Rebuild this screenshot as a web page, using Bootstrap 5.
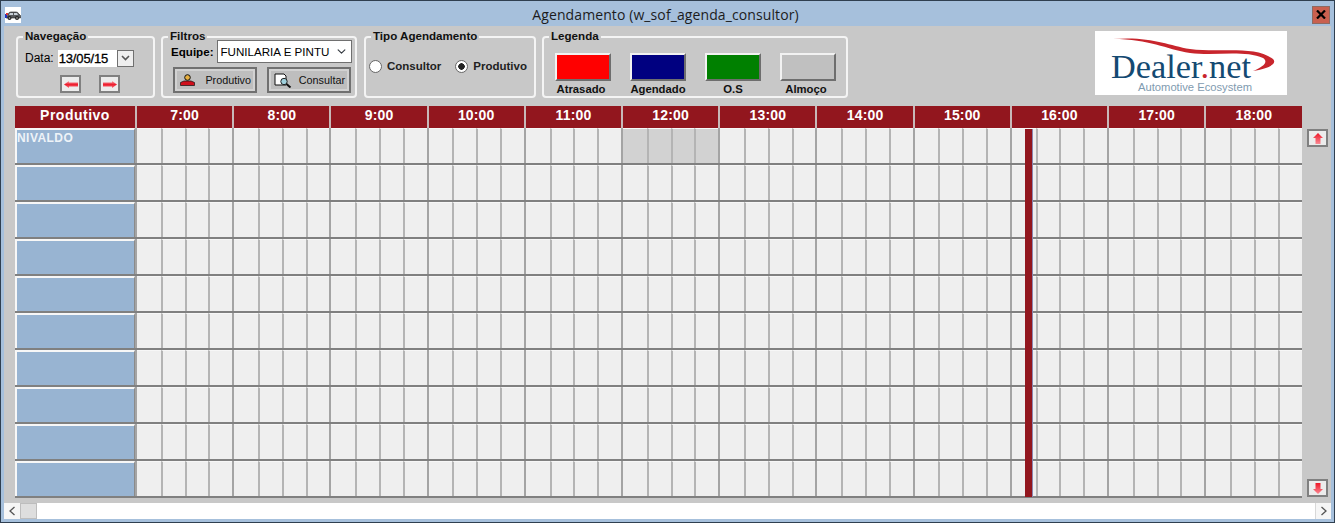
<!DOCTYPE html>
<html lang="pt">
<head>
<meta charset="utf-8">
<title>Agendamento</title>
<link rel="stylesheet" href="https://cdn.jsdelivr.net/npm/bootstrap@5.3.0/dist/css/bootstrap.min.css">
<style>
html,body{height:100%;margin:0;overflow:hidden;background:#c8c8c8}
body{font-family:"Liberation Sans",Arial,sans-serif;color:#000}
.win{width:1335px;height:523px;background:#c8c8c8;border:1px solid #2f3f50;border-bottom-width:1px}
.win-title{height:25px;background:#a6c0dc;padding:0 4px 0 4px;flex:none}
.win-title-text{font-family:"Open Sans",sans-serif;font-size:14px;letter-spacing:.1px;color:#1c1c1c;left:-1px;top:1px}
.app-icon{width:16px;height:16px;background:#fff;display:block;position:relative;top:1px}
.close-x{width:18px;height:18px;background:#c9604f;border:1px solid #8d6a62;font-size:0;padding:0;position:relative;top:1px}
.win-body{border-left:3px solid #a6c0dc;border-right:3px solid #a6c0dc;border-bottom:3px solid #a6c0dc;flex:1;min-height:0}
.toolbar{height:80px;padding:4px 0 0 12px;flex:none}
.gbox{height:68px;margin:0 6px 0 0;border:2px solid #f4f4f4;border-radius:4px;padding:0;min-width:0;flex:none}
.gbox legend{float:none;width:auto;font-size:11.6px;font-weight:700;line-height:13px;margin:-1px 0 0 5px;padding:0 2px;color:#111;position:relative;top:-1px}
.g-nav{width:139px}.g-fil{width:196px;margin-right:7px}.g-tipo{width:172px}.g-leg{width:306px}
.nav-row{margin:6px 0 0 7px}
.g-lab{font-size:12px;margin-right:4px}
.date-in{width:59px;height:17px;background:#fff;font-size:13px;line-height:17px;letter-spacing:-.15px;padding-left:1px;-webkit-text-stroke:.3px #000}
.date-drop{width:17px;height:17px;background:#eee;border:1px solid #707070;padding:0}
.arrow-row{margin:8px 0 0 42px;gap:18px}
.arrow-btn{width:21px;height:18px;background:#ececec;border:2px solid #808080;padding:0;line-height:0}
.fil-top{padding-left:8px;margin-top:-3px}
.equipe-lab{font-size:11.6px;font-weight:700;margin-right:3px}
.equipe-sel{width:135px;height:23px;border:1px solid #707070;border-radius:0;padding:0 0 0 3px;font-size:11.6px;line-height:21px;background-position:right 4px center;background-size:11px 9px;color:#000;font-family:"Liberation Sans",sans-serif}
.fil-btns{padding-left:10px;margin-top:4px;gap:10px}
.tool-btn{width:84px;height:26px;border:2px solid #707070;border-radius:0;background:#bebebe;box-shadow:inset 0 0 0 2px #d2d2d2;padding:0 4px 0 5px;font-size:10.8px;color:#111}
.tipo-row{margin:15px 0 0 3px}
.tipo-lab{font-size:11.5px;font-weight:700;color:#222;margin-left:5px}
.tipo-gap{margin-right:14px}
.rad{width:13px;height:13px;margin:0;border:1px solid #666;background-color:#fff;float:none;flex:none}
.rad:checked{background-color:#fff;border-color:#666;background-image:radial-gradient(circle,#222 0 3px,transparent 3.5px)}
.leg-row{margin:10px 0 0 11px;gap:19px}
.leg-item{width:56px}
.sw{width:56px;height:28px;border:2px solid;border-color:#f2f2f2 #6e6e6e #6e6e6e #f2f2f2}
.sw-red{background:#ff0000}.sw-navy{background:#000080}.sw-green{background:#008000}.sw-gray{background:#c0c0c0}
.leg-txt{font-size:11.3px;font-weight:700;line-height:13px;margin-top:2px;white-space:nowrap;color:#111}
.leg-nudge{padding-right:4px}
.logo-box{width:192px;height:64px;background:#fff;margin:1px 44px 0 auto;flex:none}
.sched-wrap{padding:0 0 0 11px;height:391px;flex:none}
.sched{width:1286.5px;position:relative;flex:none}
.hrow{display:grid;grid-template-columns:120px repeat(12,1fr)}
.hhead{height:22px;background:#92161e;color:#fff;font-weight:700;font-size:14px;line-height:18px;text-align:center}
.hhead > div{border-left:2px solid #c8b8b8;letter-spacing:.15px}
.hhead > div:first-child{border-left:0;letter-spacing:.5px}
.srow{height:37px;border-bottom:2px solid #808080}
.name-cell{background:#98b4d2;border-top:2px solid #f7f7f7;border-left:2px solid #f7f7f7;border-right:1px solid #8a8a8a;color:#eef3f8;font-weight:700;font-size:12px;line-height:15px;padding-top:1px;letter-spacing:.45px;overflow:hidden}
.hour-cell{display:grid;grid-template-columns:repeat(4,1fr);border-left:2px solid #a4a4a4}
.hour-cell > div{background:#efefef;border-left:2px solid #b4b4b4;border-top:1px solid #f7f7f7}
.hour-cell > div:first-child{border-left:0}
.hour-cell.lunch > div{background:#d2d2d2}
.now-bar{position:absolute;left:1010px;top:23px;bottom:0;width:8px;background:#92161e;border-right:1px solid #8b86b0}
.side-col{width:21px;margin-left:5.5px;padding-top:23px}
.sc-btn{width:21px;height:18px;background:#ececec;border:2px solid #808080;padding:0;line-height:0}
.hscroll{height:16px;margin-top:6px;background:#fff;flex:none}
.hs-arrow{width:16px;height:16px;background:#f6f6f6;padding:0;border:0;line-height:0}
.hs-thumb{width:17px;height:16px;background:#dedede;border:1px solid #bdbdbd}
.hs-track{background:#fff}
.hs-end{border-left:1px solid #d8d8d8}
</style>
</head>
<body>
<svg width="0" height="0" class="position-absolute">
  <defs>
    <linearGradient id="gradH" x1="0" y1="0" x2="0" y2="1"><stop offset="0" stop-color="#f7a0a8"/><stop offset=".5" stop-color="#ee2030"/><stop offset="1" stop-color="#f56a75"/></linearGradient>
    <linearGradient id="gradV" x1="0" y1="0" x2="0" y2="1"><stop offset="0" stop-color="#ee1525"/><stop offset="1" stop-color="#fa8a94"/></linearGradient>
  </defs>
</svg>
<div class="win d-flex flex-column">
  <div class="win-title d-flex align-items-center justify-content-between position-relative">
    <svg class="app-icon" viewBox="0 0 16 16"><path d="M2 10 L3.500 6.500 Q4 5 6 5 H11 Q13 5 13.500 6.500 L15.500 8.500 V11 H1 V10 Z" fill="#55585c" stroke="#222" stroke-width=".6"/><path d="M5 6 H8 V8 H4 Z M9 6 H12 L13 8 H9 Z" fill="#c8d0d8"/><circle cx="4.500" cy="11" r="2" fill="#222"/><circle cx="12" cy="11" r="2" fill="#222"/><circle cx="4.500" cy="11" r=".8" fill="#bbb"/><circle cx="12" cy="11" r=".8" fill="#bbb"/><path d="M0 7h2v4H0z" fill="#2030c0"/><path d="M1 6h2v2H1z" fill="#d33"/></svg>
    <div class="win-title-text position-relative">Agendamento (w_sof_agenda_consultor)</div>
    <button class="close-x d-flex align-items-center justify-content-center" aria-label="Fechar"><svg width="10" height="9" viewBox="0 0 10 9"><path d="M1 .5 L9 8.500 M9 .5 L1 8.500" stroke="#000" stroke-width="2.200"/></svg></button>
  </div>
  <div class="win-body d-flex flex-column">
    <div class="toolbar d-flex align-items-start">
      <fieldset class="gbox g-nav">
        <legend>Navegação</legend>
        <div class="nav-row d-flex align-items-center">
          <span class="g-lab">Data:</span>
          <span class="date-in">13/05/15</span>
          <button class="date-drop d-flex align-items-center justify-content-center"><svg width="9" height="6" viewBox="0 0 9 6"><path d="M1 1 L4.500 4.500 L8 1" fill="none" stroke="#555" stroke-width="1.600"/></svg></button>
        </div>
        <div class="arrow-row d-flex">
          <button class="arrow-btn"><svg width="14" height="7" viewBox="0 0 14 7"><path d="M0 3.500 L5 0 V1.500 H14 V5.500 H5 V7 Z" fill="url(#gradH)"/></svg></button>
          <button class="arrow-btn"><svg width="14" height="7" viewBox="0 0 14 7"><path d="M14 3.500 L9 0 V1.500 H0 V5.500 H9 V7 Z" fill="url(#gradH)"/></svg></button>
        </div>
      </fieldset>
      <fieldset class="gbox g-fil">
        <legend>Filtros</legend>
        <div class="fil-top d-flex align-items-center">
          <span class="equipe-lab">Equipe:</span>
          <select class="form-select equipe-sel"><option>FUNILARIA E PINTU</option></select>
        </div>
        <div class="fil-btns d-flex">
          <button class="tool-btn d-flex align-items-center justify-content-between"><svg width="15" height="12" viewBox="0 0 15 12"><path d="M.5 11.500 V8.500 L4 7 H11 L14.500 8.500 V11.500 Z" fill="#d0101c" stroke="#111" stroke-width=".7"/><circle cx="7.500" cy="3.500" r="2.800" fill="#e8b040" stroke="#111"/></svg><span>Produtivo</span></button>
          <button class="tool-btn d-flex align-items-center justify-content-between"><svg width="18" height="15" viewBox="0 0 18 15"><path d="M1 1 H10 L12 3 V12 H1 Z" fill="#fff" stroke="#111"/><circle cx="10" cy="8.500" r="3.200" fill="#9fd0dc" stroke="#222"/><path d="M12.500 11 L16.500 14.500" stroke="#111" stroke-width="2"/></svg><span>Consultar</span></button>
        </div>
      </fieldset>
      <fieldset class="gbox g-tipo">
        <legend>Tipo Agendamento</legend>
        <div class="tipo-row d-flex align-items-center">
          <input class="form-check-input rad" type="radio" name="tipo">
          <span class="tipo-lab tipo-gap">Consultor</span>
          <input class="form-check-input rad" type="radio" name="tipo" checked>
          <span class="tipo-lab">Produtivo</span>
        </div>
      </fieldset>
      <fieldset class="gbox g-leg">
        <legend>Legenda</legend>
        <div class="leg-row d-flex">
          <div class="leg-item text-center"><div class="sw sw-red"></div><div class="leg-txt leg-nudge">Atrasado</div></div>
          <div class="leg-item text-center"><div class="sw sw-navy"></div><div class="leg-txt">Agendado</div></div>
          <div class="leg-item text-center"><div class="sw sw-green"></div><div class="leg-txt">O.S</div></div>
          <div class="leg-item text-center"><div class="sw sw-gray"></div><div class="leg-txt leg-nudge">Almoço</div></div>
        </div>
      </fieldset>
      <div class="logo-box">
        <svg width="192" height="64" viewBox="0 0 192 64">
          <path d="M18 8 C55 5 72 14 95 18 C125 22 160 14 178 28 C183 33 172 38 158 40 C168 36 174 31 168 27 C150 19 120 25 95 22 C70 18 55 8 18 8 Z" fill="#c8252c"/>
          <text x="16" y="47" font-family="Liberation Serif,serif" font-size="34" fill="#144a72" textLength="140" lengthAdjust="spacingAndGlyphs">Dealer<tspan fill="#c8252c">.</tspan>net</text>
          <text x="43" y="60" font-family="Liberation Sans,sans-serif" font-size="10" fill="#7f9bb0" textLength="114" lengthAdjust="spacingAndGlyphs">Automotive Ecosystem</text>
        </svg>
      </div>
    </div>
    <div class="sched-wrap d-flex">
      <div class="sched">
        <div class="hrow hhead">
          <div>Produtivo</div><div>7:00</div><div>8:00</div><div>9:00</div><div>10:00</div><div>11:00</div><div>12:00</div><div>13:00</div><div>14:00</div><div>15:00</div><div>16:00</div><div>17:00</div><div>18:00</div>
        </div>
        <div id="rows"></div>
        <div class="now-bar"></div>
      </div>
      <div class="side-col d-flex flex-column justify-content-between">
        <button class="sc-btn"><svg width="10" height="11" viewBox="0 0 10 11"><path d="M5 0 L10 5 H7.500 V11 H2.500 V5 H0 Z" fill="url(#gradV)"/></svg></button>
        <button class="sc-btn"><svg width="10" height="11" viewBox="0 0 10 11"><path d="M5 11 L10 6 H7.500 V0 H2.500 V6 H0 Z" fill="url(#gradV)"/></svg></button>
      </div>
    </div>
    <div class="hscroll d-flex">
      <button class="hs-arrow"><svg width="8" height="10" viewBox="0 0 8 10"><path d="M6.500 1 L2 5 L6.500 9" fill="none" stroke="#555" stroke-width="1.300"/></svg></button>
      <div class="hs-thumb"></div>
      <div class="hs-track flex-grow-1"></div>
      <button class="hs-arrow hs-end"><svg width="8" height="10" viewBox="0 0 8 10"><path d="M1.500 1 L6 5 L1.500 9" fill="none" stroke="#555" stroke-width="1.300"/></svg></button>
    </div>
  </div>
</div>
<script>
var host=document.getElementById('rows'),html='';
for(var r=0;r<10;r++){
  html+='<div class="hrow srow"><div class="name-cell">'+(r===0?'NIVALDO':'')+'</div>';
  for(var h=7;h<=18;h++){
    html+='<div class="hour-cell'+(r===0&&h===12?' lunch':'')+'"><div></div><div></div><div></div><div></div></div>';
  }
  html+='</div>';
}
host.innerHTML=html;
</script>
<script src="https://cdn.jsdelivr.net/npm/bootstrap@5.3.0/dist/js/bootstrap.bundle.min.js"></script>
</body>
</html>
